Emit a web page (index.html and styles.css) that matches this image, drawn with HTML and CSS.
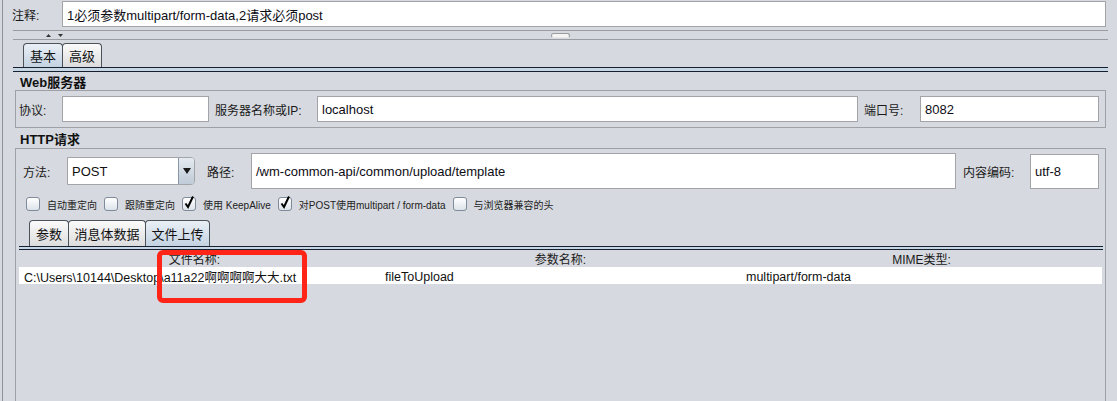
FILE: index.html
```html
<!DOCTYPE html>
<html>
<head>
<meta charset="utf-8">
<link rel="stylesheet" href="styles.css">
</head>
<body>
<div class="frame">
  <div class="comment-row">
    <span class="lbl comment-lbl">注释:</span>
    <div class="field comment-field">1必须参数multipart/form-data,2请求必须post</div>
  </div>

  <div class="splitter">
    <svg class="arrows" width="18" height="5" viewBox="0 0 18 5"><polygon points="0,4 2.5,1 5,4"/><polygon points="12,1 17,1 14.5,4"/></svg>
    <span class="grip"></span>
    <span></span>
  </div>

  <div class="tabbar">
    <div class="tabs">
      <span class="tab sel">基本</span>
      <span class="tab">高级</span>
    </div>
    <div class="tabline"></div>
  </div>

  <div class="title">Web服务器</div>
  <div class="panel web">
    <span class="lbl w-proto">协议:</span>
    <div class="field f-proto"></div>
    <span class="lbl w-server">服务器名称或IP:</span>
    <div class="field f-server">localhost</div>
    <span class="lbl w-port">端口号:</span>
    <div class="field f-port">8082</div>
  </div>

  <div class="title t-http">HTTP请求</div>
  <div class="panel http">
    <div class="method-row">
      <span class="lbl w-method">方法:</span>
      <div class="combo">
        <span class="combo-val">POST</span>
        <span class="combo-btn"><svg width="8" height="6" viewBox="0 0 8 6"><polygon points="0,0 8,0 4,6"/></svg></span>
      </div>
      <span class="lbl w-path">路径:</span>
      <div class="field f-path">/wm-common-api/common/upload/template</div>
      <span class="lbl w-enc">内容编码:</span>
      <div class="field f-enc">utf-8</div>
    </div>

    <div class="check-row">
      <span class="cb"></span><span class="cb-lbl">自动重定向</span>
      <span class="cb"></span><span class="cb-lbl">跟随重定向</span>
      <span class="cb on"><svg width="14" height="14" viewBox="0 0 14 14"><path d="M3.5 7.5 L6 11 L11 0.5"/></svg></span><span class="cb-lbl">使用 KeepAlive</span>
      <span class="cb on"><svg width="14" height="14" viewBox="0 0 14 14"><path d="M3.5 7.5 L6 11 L11 0.5"/></svg></span><span class="cb-lbl">对POST使用multipart / form-data</span>
      <span class="cb"></span><span class="cb-lbl">与浏览器兼容的头</span>
    </div>

    <div class="inner-tabs">
      <div class="tabs itabs">
        <span class="tab it1">参数</span>
        <span class="tab it2">消息体数据</span>
        <span class="tab sel it3">文件上传</span>
      </div>
      <div class="tabline thin"></div>
    </div>

    <div class="table">
      <div class="row head">
        <span>文件名称:</span>
        <span>参数名称:</span>
        <span>MIME类型:</span>
      </div>
      <div class="row data">
        <span>C:\Users\10144\Desktop\a11a22啊啊啊啊大大.txt</span>
        <span>fileToUpload</span>
        <span>multipart/form-data</span>
      </div>
      <div class="mark"></div>
    </div>
  </div>
</div>
</body>
</html>
```

FILE: styles.css
```css
* { box-sizing: border-box; }
html, body { margin: 0; padding: 0; }
body {
  background: #d6d9df;
  font-family: "Liberation Sans", "Noto Sans CJK SC", sans-serif;
  color: #111;
  width: 1117px;
  height: 401px;
  overflow: hidden;
}
.frame {
  margin-left: 2px;
  border-left: 1px solid #8e9095;
  height: 401px;
  padding-left: 10px;
}
.lbl { font-size: 12px; white-space: nowrap; color: #1a1a1a; }
.field {
  height: 26px;
  border: 1px solid #a2a4a8;
  background: #fff;
  font-size: 13px;
  padding-left: 4px;
  display: flex;
  align-items: center;
  white-space: nowrap;
  color: #0c0c14;
}

/* comment row */
.comment-row { display: flex; align-items: center; height: 27px; padding-top: 1px; }
.comment-lbl { width: 50px; margin-left: -1px; }
.comment-field { width: 1044px; }

/* splitter */
.splitter {
  margin-top: 3px;
  width: 1095px;
  height: 10px;
  border-top: 1px solid #9a9ca1;
  border-bottom: 1px solid #9a9ca1;
  display: grid;
  grid-template-columns: 1fr auto 1fr;
  align-items: center;
}
.arrows { margin-left: 33px; fill: #333; }
.grip {
  width: 19px;
  height: 5px;
  border: 1px solid #9c9c9c;
  border-bottom-color: #e8e8e8;
  border-radius: 3px;
  background: #f4f4f4;
}

/* tabs */
.tabbar { margin-top: 3px; width: 1095px; }
.tabs { display: flex; align-items: flex-end; height: 24px; padding-left: 10px; }
.tab {
  height: 24px;
  border: 1px solid #4c525a;
  border-bottom: none;
  border-radius: 4px 4px 0 0;
  background: linear-gradient(#fbfbfb, #dcdcdc);
  font-size: 13px;
  display: flex;
  align-items: center;
  justify-content: center;
  width: 40px;
  color: #111;
}
.tab + .tab { margin-left: -1px; }
.tab.sel { background: linear-gradient(#eaf0f6, #c3d2e1); }
.tabline {
  height: 5px;
  border-top: 1px solid #17202e;
  border-bottom: 1px solid #17202e;
  background: #c7d6e5;
}
.tabline.thin { height: 4px; }

/* titles */
.title {
  height: 18px;
  padding-left: 7px;
  font-weight: bold;
  font-size: 13px;
  display: flex;
  align-items: center;
  color: #111;
}
.t-http { height: 20px; }

/* panels */
.panel {
  margin-left: 2px;
  width: 1091px;
  border: 1px solid #9ea0a5;
}
.web {
  height: 38px;
  display: flex;
  align-items: center;
  padding-left: 3px;
}
.w-proto { width: 43px; }
.f-proto { width: 147px; }
.w-server { margin-left: 6px; width: 102px; }
.f-server { width: 541px; }
.w-port { margin-left: 6px; width: 56px; }
.f-port { width: 179px; }

.http {
  height: 260px;
  border-bottom: none;
  padding: 4px 2px 0 3px;
}
.method-row { display: flex; align-items: center; height: 36px; }
.w-method { margin-left: 4px; width: 44px; }
.combo {
  width: 128px;
  height: 28px;
  border: 1px solid #a2a4a8;
  border-radius: 0 4px 4px 0;
  background: #fff;
  display: flex;
  align-items: stretch;
}
.combo-val { flex: 1; font-size: 13px; padding-left: 4px; display: flex; align-items: center; }
.combo-btn {
  width: 16px;
  border-left: 1px solid #8a96a3;
  border-radius: 0 3px 3px 0;
  background: linear-gradient(#e4eaf0, #bfcbd8);
  display: flex;
  align-items: center;
  justify-content: center;
}
.combo-btn svg { fill: #1a1a1a; }
.w-path { margin-left: 12px; width: 44px; }
.f-path { width: 705px; height: 36px; }
.w-enc { margin-left: 7px; width: 67px; }
.f-enc { width: 69px; height: 35px; }

.check-row { display: flex; align-items: center; height: 14px; margin-top: 8px; padding-left: 7px; }
.cb {
  width: 14px;
  height: 14px;
  border: 1px solid #7f8b98;
  border-radius: 3px;
  background: linear-gradient(#ffffff, #dde3ea);
  position: relative;
  flex: none;
}
.cb svg { position: absolute; left: -1px; top: -2px; overflow: visible; }
.cb svg path { fill: none; stroke: #000; stroke-width: 2; }
.cb-lbl { font-size: 10px; margin-left: 7px; margin-right: 7px; white-space: nowrap; color: #222; }

.inner-tabs { margin-top: 9px; width: 1084px; }
.itabs { height: 26px; }
.itabs .tab { height: 26px; font-size: 13px; }
.it1 { width: 40px; }
.it2 { width: 78px; }
.it3 { width: 65px; }

.table { position: relative; width: 1083px; }
.row { display: grid; grid-template-columns: 361px 361px 361px; height: 17px; align-items: center; white-space: nowrap; }
.head { font-size: 12px; text-align: center; color: #1a1a1a; }
.head span:first-child { padding-right: 10px; }
.data { background: #fff; font-size: 12.5px; }
.data span { padding-left: 5px; }
.mark {
  position: absolute;
  left: 138px;
  top: 0;
  width: 150px;
  height: 53px;
  border: 5px solid #fe2418;
  border-radius: 6px;
}
```
